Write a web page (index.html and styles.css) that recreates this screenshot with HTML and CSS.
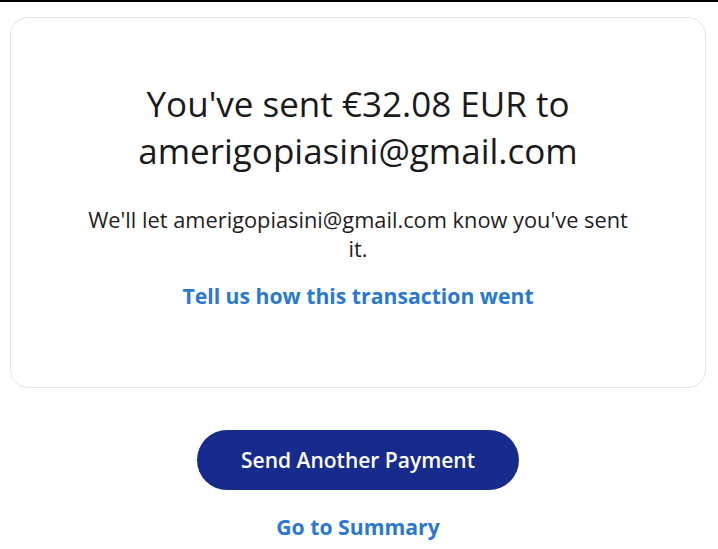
FILE: index.html
```html
<!DOCTYPE html>
<html>
<head>
<meta charset="UTF-8">
<title>Payment sent</title>
<link rel="stylesheet" href="styles.css">
</head>
<body>
<div class="topline"></div>
<div class="page">
  <div class="card">
    <h1 class="sent-title">You've sent €32.08 EUR to amerigopiasini@gmail.com</h1>
    <p class="sent-note">We'll let amerigopiasini@gmail.com know you've sent it.</p>
    <a class="link" href="#">Tell us how this transaction went</a>
  </div>
  <div class="actions">
    <button class="btn-primary" type="button">Send Another Payment</button>
    <a class="link" href="#">Go to Summary</a>
  </div>
</div>
</body>
</html>
```

FILE: styles.css
```css
body {
  margin: 0;
  background: #ffffff;
  color: #1e1e1e;
  font-family: "Open Sans", "Lato", sans-serif;
}

.topline {
  height: 2px;
  background: #000000;
}

.page {
  padding: 15px 12px 0 10px;
}

.card {
  border: 1px solid #e3e3e3;
  border-radius: 18px;
  height: 371px;
  box-sizing: border-box;
  display: flex;
  flex-direction: column;
  align-items: center;
  padding-top: 62px;
}

.sent-title {
  margin: 0;
  width: 480px;
  text-align: center;
  font-size: 35px;
  font-weight: 400;
  line-height: 47px;
  color: #1a1a1a;
}

.sent-note {
  margin: 31px 0 0;
  width: 552px;
  text-align: center;
  font-size: 21.8px;
  line-height: 29px;
}

.link {
  color: #2a78d0;
  font-weight: 700;
  font-size: 21.2px;
  line-height: 28px;
  text-decoration: none;
}

.card .link {
  margin-top: 19px;
}

.actions {
  display: flex;
  flex-direction: column;
  align-items: center;
  margin-top: 42px;
}

.btn-primary {
  width: 322px;
  height: 60px;
  border: none;
  border-radius: 30px;
  background: #172b8c;
  color: #ffffff;
  font-family: inherit;
  font-size: 21px;
  font-weight: 600;
}

.actions .link {
  margin-top: 23px;
}
```
